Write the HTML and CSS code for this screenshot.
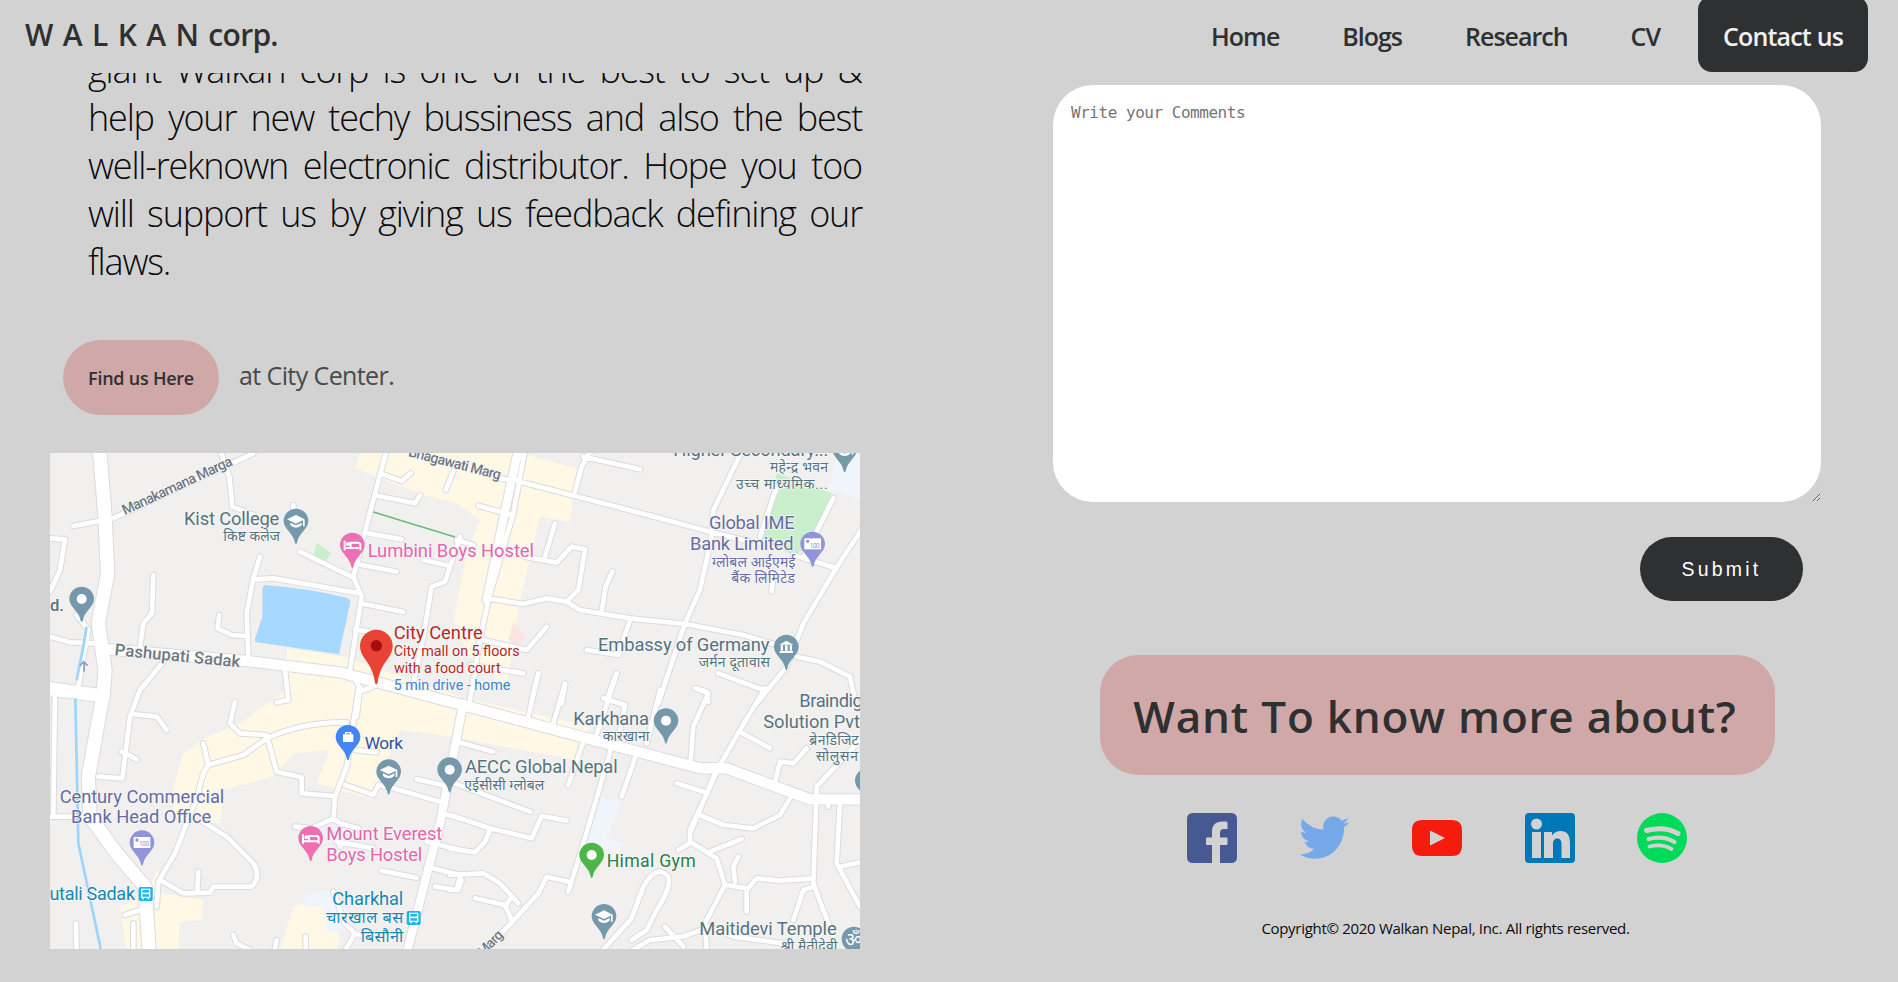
FILE: index.html
```html
<!DOCTYPE html>
<html lang="en">
<head>
<meta charset="utf-8">
<title>WALKAN corp.</title>
<link rel="stylesheet" href="styles.css">
</head>
<body>
<header class="header">
  <div class="logo">W A L K A N corp.</div>
  <nav class="nav">
    <a class="n-home">Home</a><a class="n-blogs">Blogs</a><a class="n-research">Research</a><a class="n-cv">CV</a><a class="contact">Contact us</a>
  </nav>
</header>
<main class="main">
  <section class="left">
    <p class="about"><span>giant Walkan corp is one of the best to set up &amp;</span><span>help your new techy bussiness and also the best</span><span>well-reknown electronic distributor. Hope you too</span><span>will support us by giving us feedback defining our</span><span class="last">flaws.</span></p>
    <div class="find"><a class="find-btn">Find us Here</a><span class="place">at City Center.</span></div>
    <svg class="map" viewBox="30 39 2430 1488" preserveAspectRatio="none">
      <defs>
        <path id="pin" d="M0-37a37 37 0 0 1 37 37c0 24-29 36-34 65q-3 8-6 0C-8 36-37 24-37 0A37 37 0 0 1 0-37Z"/>
        <g id="cap" fill="#fff"><path d="M-27-5 0-18 26-5 0 8Z"/><path d="M-17 5 0 13 17 5v8Q0 27-17 13ZM21-4h5v20h-5Z"/></g>
        <g id="bed" fill="none" stroke="#fff" stroke-width="6"><path d="M-23-13V16M-23 9H24M24 16V-1Q24-7 17-7H-5V8"/><circle cx="-13" cy="-3" r="3"/></g>
        <g id="money"><rect x="-25" y="-17" width="50" height="33" fill="#fff"/><circle cx="-15" cy="-8" r="5" fill="#8f95d6"/><text x="-9" y="11" font-size="19" textLength="30">100</text></g>
        <g id="bus"><rect width="42" height="42" rx="5" fill="#1eb5ea"/><path d="M9 7h24v24H9Z" fill="none" stroke="#fff" stroke-width="4"/><path d="M9 19h24M13 32v5M29 32v5" stroke="#fff" stroke-width="5"/></g>
        <g id="roads">
          <path d="M100 258 220 235 640 40 M540 30 568 110 577 200 640 225 M760 195V230 M1040 30 1000 180 940 410 965 470 930 690 M1020 100 1085 123 1112 100 M1015 168 1125 190 1140 165 M985 280 1085 298 M950 372 1070 395 M780 335 940 413 M660 350 640 415 620 520 625 650 M640 418 700 415 960 460 M962 490 1090 516 M945 568 1020 580 M1240 95 1217 150 M1150 360 1230 378 M1260 290 1215 425 1175 440 1150 590 1120 730 M340 405 336 520 310 550 300 620 M370 665 300 750 270 830 247 1015 175 1010 M538 525 533 565 575 585 620 588 M30 295 75 298 60 390 30 455 M30 590 90 607 170 610 M110 525 145 570 115 740 M735 690 745 780 710 787 M930 690 960 745 950 830 M1010 735 960 755"/>
          <path transform="translate(0 750)" d="M45 0 40 370 M30 380H150 M275 72 350 80 380 120 M245 185 290 208 M585 35 570 100 600 130 680 135 710 245 785 262 785 310 880 318 M920 97 Q790 95 680 145 L610 195 505 225 490 160 M505 225 Q485 250 475 310 L405 490 355 575 350 650 M480 390 560 440 640 520 Q665 560 635 590 L520 590 510 608 430 610 360 570 M475 545 472 600 M955 0 920 230 885 320 880 390 M945 180 1010 187 M915 285 1000 315 1015 285 1060 295 1200 335 M1130 268 1230 290 M1205 370 1260 385 M765 410 815 415 880 385 900 400 955 415 M890 455 1000 475 M900 470 890 435 M1160 455 1260 480 M1025 542 1130 563 M1160 530 1260 555 M1185 590 1255 600 1265 570 M108 700 110 790 M255 675 300 660 M280 700V780 M580 735 590 760 630 780 M710 750 702 790 M797 740V790 M880 605 915 700 945 730 910 790 M940 730 1010 742"/>
          <path transform="translate(1230 0)" d="M225 30 190 220 115 480 90 600 60 780 M150 115 210 125 500 200 780 275 900 305 M85 197 185 225 M420 35 395 80 375 155 M400 50 570 88 M875 35 790 210 785 290 750 450 705 550 625 790 M980 140 930 290 M1150 175 1060 355 M1030 345 1160 385 M1240 260 1155 390 1060 550 1010 680 920 790 M315 250 285 350 M225 350 320 368 365 320 405 328 385 450 350 485 M20 300 70 315 M115 475 220 492 290 475 350 485 390 510 540 535 705 552 880 585 980 615 M487 395 467 440 455 515 M540 540 505 645 410 630 M290 560 230 630 100 600 M970 410 965 455 M1040 650 1110 665 1200 710 1215 780 M805 700 940 750 M500 700 470 780 M265 700 245 780 M345 735 335 790 M735 745 770 755 775 785 M60 675 220 700"/>
          <path transform="translate(1230 750)" d="M265-50 235 80 M345-20 310 100 M500-50 455 90 430 160 M460 25 525 45 510 120 M630 0 590 160 M735-5 775 10 730 110 722 210 M945-5 870 120 810 225 720 420 720 460 685 480 M20 155 130 185 M0 275 240 365 M0 375 120 415 245 445 275 378 350 392 M120 420 105 455 75 487 0 475 M400 155 355 285 M485 170 400 460 355 605 M560 190 515 320 M870 125 960 175 M680 280 760 305 M795 250 720 430 M750 375 820 405 910 415 990 375 1020 325 M1240 140 1100 290 1090 580 1150 740 M1070 175 1030 220 990 215 975 275 M1170 335 1160 520 1230 650 M1170 530 1240 515 M720 455 800 505 825 585 765 700 770 780 M780 485 875 447 M865 500 850 530 855 575 M830 585 890 595 890 665 M890 600 920 565 990 572 1090 565 M1090 590 1060 600 1030 690 M0 555 100 550 150 580 205 640 M30 560 20 600 0 600 M75 625 165 645 185 690 M185 620 165 650 M355 575 290 560 265 610 100 790 M450 790 545 685 580 590 Q620 520 655 560 Q665 590 620 660 L590 720 545 750 M530 790 600 750 700 740 780 710 850 740 1000 760 M645 710 700 770 M1135 335V350"/>
        </g>
        <g id="main">
          <path class="w-large" d="M178 20 195 230 203 400 175 550 195 690 190 760 145 1010 150 1130 230 1240 315 1340 328 1540M20 745 190 768"/>
          <path class="w-medium" d="M190 627 620 663 900 697 1230 785 1630 892 1980 985 2060 985 2310 1078 2470 1078"/>
          <path class="w-small" d="M1270 790 1200 1150 1100 1540M1435 30 1400 190 1340 480"/>
        </g>
      </defs>
      <rect x="30" y="39" width="2430" height="1488" fill="#f1f0ef"/>
      <g fill="#fef8e5">
        <path d="M960 39H1440L1610 85 1590 245 1500 230 1440 480 1400 740 1290 650 1240 540 1280 340 1320 240 1250 190 1150 165 945 85Z"/>
        <path d="M740 625 910 650 1260 770 1650 860 1610 960 1340 910 1240 890 1080 870 1020 1020 1000 1080 830 1030 870 930 760 940 700 1010 550 1050 540 1150 400 1130 400 1040 430 940 500 890 600 850 740 750Z"/>
        <path d="M350 1290 360 1360 490 1380 485 1440 420 1445 415 1530H260L240 1400 320 1370ZM760 1400 850 1370 900 1490 890 1530H720Z"/>
      </g>
      <g fill="#c9efcd"><path d="M830 308 873 338 858 363 820 348ZM2210 100 2375 160 2330 310 2260 345 2155 295Z"/></g>
      <path fill="#fce4e2" d="M1420 545 1460 595 1430 620 1405 600Z"/>
      <path fill="#f0f5fb" d="M1685 1075 1745 1085 1700 1195 1750 1210 1735 1240 1640 1210ZM800 1360 890 1350 940 1460 860 1480 850 1400 790 1400ZM2390 39H2460V178L2370 150Z"/>
      <g class="casing"><use href="#main"/><use href="#roads" stroke-width="20"/></g>
      <g class="road"><use href="#main"/><use href="#roads" stroke-width="14"/></g>
      <path d="M675 435q130 10 245 38 12 4 10 18L897 643 650 607Q640 605 647 590L667 530V450q0-12 8-15Z" fill="#a7d8ff"/>
      <path d="M140 560 130 620 110 720M106 775 115 1210 185 1540" fill="none" stroke="#9cd5fb" stroke-width="8"/>
      <path d="M1000 216 1245 291" stroke="#66b97a" stroke-width="4"/>
      <path d="M132 695V670M120 677 131 665 143 677" fill="none" stroke="#8a9fc0" stroke-width="5"/>
      <g fill="#7598aa">
        <use href="#pin" x="768" y="243"/><use href="#pin" x="125" y="477"/><use href="#pin" x="1046" y="995"/><use href="#pin" x="2239" y="621"/><use href="#pin" x="1878" y="842"/><use href="#pin" x="1229" y="989"/><use href="#pin" x="1692" y="1429"/><use href="#pin" x="2414" y="28"/><use href="#pin" x="2482" y="1022"/><circle cx="2442" cy="1497" r="37"/>
      </g>
      <g fill="#fff"><circle cx="125" cy="477" r="15"/><circle cx="1229" cy="989" r="15"/><circle cx="1878" cy="842" r="15"/></g>
      <use href="#cap" x="768" y="243"/><use href="#cap" x="1046" y="995"/><use href="#cap" x="1692" y="1429"/><use href="#cap" x="2414" y="28"/>
      <path d="M2218 614 2239 602 2260 614ZM2219 633H2259V639H2219ZM2222 616h7v16h-7ZM2235 616h8v16h-8ZM2249 616h7v16h-7Z" fill="#fff"/>
      <g fill="#ee70b2"><use href="#pin" x="937" y="315"/><use href="#pin" x="812" y="1195"/></g>
      <use href="#bed" x="937" y="315"/><use href="#bed" x="812" y="1195"/>
      <g fill="#8f95d6"><use href="#pin" x="2318" y="312"/><use href="#pin" x="306" y="1208"/></g>
      <g fill="#8f95d6"><use href="#money" x="2318" y="312"/><use href="#money" x="306" y="1208"/></g>
      <use href="#pin" x="924" y="892" fill="#4385f4"/><path d="M909 883h6v-7h19v7h6v23h-31ZM919 883h11v-3h-11Z" fill="#fff" fill-rule="evenodd"/>
      <use href="#pin" x="1655" y="1245" fill="#4cb748"/><circle cx="1655" cy="1245" r="15" fill="#fff"/>
      <path d="M1009 569a49 49 0 0 1 49 49c0 38-38 48-45 110q-4 9-8 0C998 666 960 656 960 618a49 49 0 0 1 49-49Z" fill="#e84335"/><circle cx="1009" cy="617" r="17" fill="#a50e0e"/>
      <use href="#bus" x="296" y="1341"/><use href="#bus" x="1100" y="1413"/>
      <text class="om" x="2415" y="1518" font-size="56" fill="#fff">ॐ</text>
      <g class="labels" font-size="55">
        <g class="streets" fill="#6f7882" font-size="43"><text transform="translate(254 226) rotate(-25)" textLength="360">Manakamana Marga</text><text transform="translate(1103 48) rotate(14.5)" textLength="285">Bhagawati Marg</text><text transform="translate(223 646) rotate(5.5)" font-size="50" textLength="378">Pashupati Sadak</text><text transform="translate(1330 1552) rotate(-47)" font-size="42" textLength="90">Marg</text></g>
        <g fill="#54737f">
          <text x="432" y="256" textLength="286">Kist College</text><text x="550" y="304" font-size="42" textLength="170">किष्ट कलेज</text><text x="30" y="514" font-size="50" font-weight="500" textLength="42">d.</text>
          <text x="1900" y="47" textLength="465">Higher Secondary...</text><text x="2190" y="96" font-size="42" textLength="174">महेन्द्र भवन</text><text x="2088" y="146" font-size="42" textLength="275">उच्च माध्यमिक...</text>
          <text x="1674" y="633" textLength="514">Embassy of Germany</text><text x="1976" y="682" font-size="42" textLength="214">जर्मन दूतावास</text>
          <text x="1600" y="854" textLength="227">Karkhana</text><text x="1688" y="903" font-size="42" textLength="140">कारखाना</text>
          <text x="1275" y="1000" textLength="458">AECC Global Nepal</text><text x="1273" y="1051" font-size="42" textLength="240">एईसीसी ग्लोबल</text>
          <text x="2278" y="801" textLength="219">Braindigit</text><text x="2170" y="863" textLength="290">Solution Pvt</text><text x="2308" y="914" font-size="42" textLength="148">ब्रेनडिजिट</text><text x="2328" y="962" font-size="42" textLength="126">सोलुसन</text>
          <text x="1978" y="1484" textLength="412">Maitidevi Temple</text><text x="2222" y="1533" font-size="42" textLength="170">श्री मैतीदेवी</text>
        </g>
        <g fill="#666ca3"><text x="2007" y="266" textLength="257">Global IME</text><text x="1950" y="330" textLength="311">Bank Limited</text><text x="2016" y="380" font-size="42" textLength="250">ग्लोबल आईएमई</text><text x="2074" y="429" font-size="42" textLength="191">बैंक लिमिटेड</text><text x="59" y="1088" textLength="494">Century Commercial</text><text x="93" y="1150" textLength="421">Bank Head Office</text></g>
        <g fill="#e265ae"><text x="983" y="350" textLength="499">Lumbini Boys Hostel</text><text x="859" y="1201" textLength="348">Mount Everest</text><text x="859" y="1263" textLength="288">Boys Hostel</text></g>
        <g fill="#b8281f"><text x="1061" y="598" textLength="267">City Centre</text><text x="1061" y="649" font-size="43" textLength="378">City mall on 5 floors</text><text x="1062" y="699" font-size="43" textLength="320">with a food court</text></g>
        <text x="1061" y="750" font-size="43" fill="#3d83cf" textLength="350">5 min drive - home</text>
        <text x="974" y="928" font-size="52" fill="#34529b" textLength="115">Work</text>
        <text x="1700" y="1280" font-size="53" fill="#258147" textLength="267">Himal Gym</text>
        <g fill="#1687b2"><text x="-5" y="1380" font-size="54" textLength="290">Putali Sadak</text><text x="877" y="1396" textLength="213">Charkhal</text><text x="858" y="1450" font-size="49" textLength="232">चारखाल बस</text><text x="962" y="1506" font-size="49" textLength="128">बिसौनी</text></g>
      </g>
    </svg>
  </section>
  <section class="right">
    <textarea class="comments" placeholder="Write your Comments"></textarea>
    <button class="submit">Submit</button>
    <div class="more">Want To know more about?</div>
    <div class="social">
      <svg viewBox="0 0 50 50"><path fill="#475993" d="M6 0H44Q50 0 50 6V44Q50 50 44 50H33V32H39.500Q40.500 32 40.500 31V25.500Q40.500 24.500 39.500 24.500H33V20.500C33 17.500 34 16 37 16H40.500V10Q40.500 8.400 39 8.400H35C29 8.400 25 12 25 18.500V24.500H20Q19 24.500 19 25.500V31Q19 32 20 32H25V50H6Q0 50 0 44V6Q0 0 6 0Z"/></svg>
      <svg viewBox="1 0.500 50 50"><path fill="#76a9ea" d="M50.500 9.500a20 20 0 0 1-5.900 1.600 10.300 10.300 0 0 0 4.500-5.700 20 20 0 0 1-6.500 2.500A10.300 10.300 0 0 0 24.600 17.200 29 29 0 0 1 3.500 6.500a10.300 10.300 0 0 0 3.200 13.700A10 10 0 0 1 2 19v.1a10.300 10.300 0 0 0 8.200 10 10 10 0 0 1-4.600.2 10.300 10.300 0 0 0 9.600 7.100A20.600 20.600 0 0 1 .5 41.600 29 29 0 0 0 15.700 46.200c18.900 0 29.200-15.600 29.200-29.200v-2.300A21 21 0 0 0 50.500 9.500Z"/></svg>
      <svg viewBox="0 0 50 50"><path fill="#f61c0d" fill-rule="evenodd" d="M10 7H40Q50 7 50 17V33Q50 43 40 43H10Q0 43 0 33V17Q0 7 10 7ZM18 17.500V32.500L33 25Z"/></svg>
      <svg viewBox="0 0 50 50"><path fill="#0077b7" fill-rule="evenodd" d="M4 0H46Q50 0 50 4V46Q50 50 46 50H4Q0 50 0 46V4Q0 0 4 0ZM11.500 5.500A5.500 5.500 0 1 0 11.500 16.500 5.500 5.500 0 1 0 11.500 5.500ZM7 19H16V45H7ZM19 19H27V22.500C29 19.500 32 18 35.500 18 43 18 45 23 45 30.500V45H36.500V32C36.500 28.500 36 25.500 32.500 25.500S28 28 28 31.500V45H19Z"/></svg>
      <svg viewBox="0 0 50 50"><circle cx="25" cy="25" r="25" fill="#00da5a"/><g fill="none" stroke="#d2d2d2" stroke-linecap="round"><path stroke-width="5" d="M9.500 17.500Q27 13 41 20.500"/><path stroke-width="4.200" d="M11.500 26Q26 22 37.500 29"/><path stroke-width="3.800" d="M12.500 33.500Q25 30.500 34.500 36"/></g></svg>
    </div>
    <div class="copy">Copyright© 2020 Walkan Nepal, Inc. All rights reserved.</div>
  </section>
</main>
</body>
</html>
```
FILE: styles.css
```css
* { box-sizing: border-box; }
body { margin: 0; height: 982px; overflow: hidden; background: #d2d2d2; color: #2e3031; font-family: "Open Sans", "Noto Sans", sans-serif; white-space: nowrap; }
.header { height: 73px; display: flex; justify-content: space-between; align-items: flex-start; padding: 0 30px 0 25px; }
.logo { font-size: 30px; font-weight: 600; line-height: 69px; letter-spacing: -0.7px; word-spacing: 3px; }
.nav { display: flex; font-size: 25px; font-weight: 600; line-height: 72px; letter-spacing: -1px; }
.nav a { margin-right: 63px; }
.nav .n-cv { margin-right: 38px; }
.nav .contact { width: 170px; height: 76px; margin: -4px 0 0; padding-top: 4px; border-radius: 14px; background: #2e3031; color: #f1f1f1; text-align: center; letter-spacing: -0.8px; }
.main { height: 909px; overflow: hidden; display: grid; grid-template-columns: 1053px 768px; }
.left { padding-left: 50px; }
.about { width: 774px; margin: -27px 0 0 38px; color: #0a0a0a; font-size: 36px; font-weight: 300; line-height: 48px; letter-spacing: -1.2px; }
.about span { display: block; text-align: justify; text-align-last: justify; }
.about .last { text-align-last: left; }
.find { display: flex; align-items: center; gap: 20px; height: 75px; margin: 54px 0 38px 13px; }
.find-btn { width: 156px; height: 75px; border-radius: 38px; background: #d1a8a8; text-align: center; font-size: 18px; font-weight: 600; line-height: 77px; letter-spacing: -0.25px; }
.place { font-size: 25px; line-height: 71px; height: 75px; color: #484a4b; letter-spacing: -0.6px; }
.map { display: block; width: 810px; height: 496px; overflow: hidden; }
.map text { font-family: Roboto, "Noto Sans", sans-serif; }
.casing, .road { fill: none; stroke-linecap: round; stroke-linejoin: round; }
.casing { --edge: 6px; stroke: #dadbe0; }
.road { --edge: 0px; stroke: #fff; }
.w-large { stroke-width: calc(40px + var(--edge)); }
.w-medium { stroke-width: calc(31px + var(--edge)); }
.w-small { stroke-width: calc(25px + var(--edge)); }
.labels text { paint-order: stroke; stroke: #f8f8f8; stroke-width: 5px; stroke-linejoin: round; }
.streets { font-weight: 500; }
.right { display: flex; flex-direction: column; align-items: center; padding-top: 12px; }
.comments { display: block; flex: none; width: 768px; height: 417px; border: 0; border-radius: 40px; background: #fff; padding: 18px; font: 16px/20px "DejaVu Sans Mono", monospace; letter-spacing: -0.47px; }
.comments::placeholder { color: #757575; }
.submit { align-self: flex-end; flex: none; width: 163px; height: 64px; margin: 35px 18px 0 0; border: 0; border-radius: 32px; background: #2e3031; color: #fff; font: 19.500px "Liberation Sans", sans-serif; letter-spacing: 3.200px; }
.more { flex: none; width: 675px; height: 120px; margin-top: 54px; padding-right: 4px; border-radius: 38px; background: #d1a8a8; text-align: center; font-size: 44px; font-weight: 600; line-height: 122px; letter-spacing: 0.8px; }
.social { display: flex; justify-content: space-between; width: 500px; margin-top: 38px; }
.social svg { width: 50px; height: 50px; }
.copy { margin-top: 53px; padding-left: 17px; color: #0a0a0a; font-size: 15px; line-height: 24px; letter-spacing: -0.3px; }
```
